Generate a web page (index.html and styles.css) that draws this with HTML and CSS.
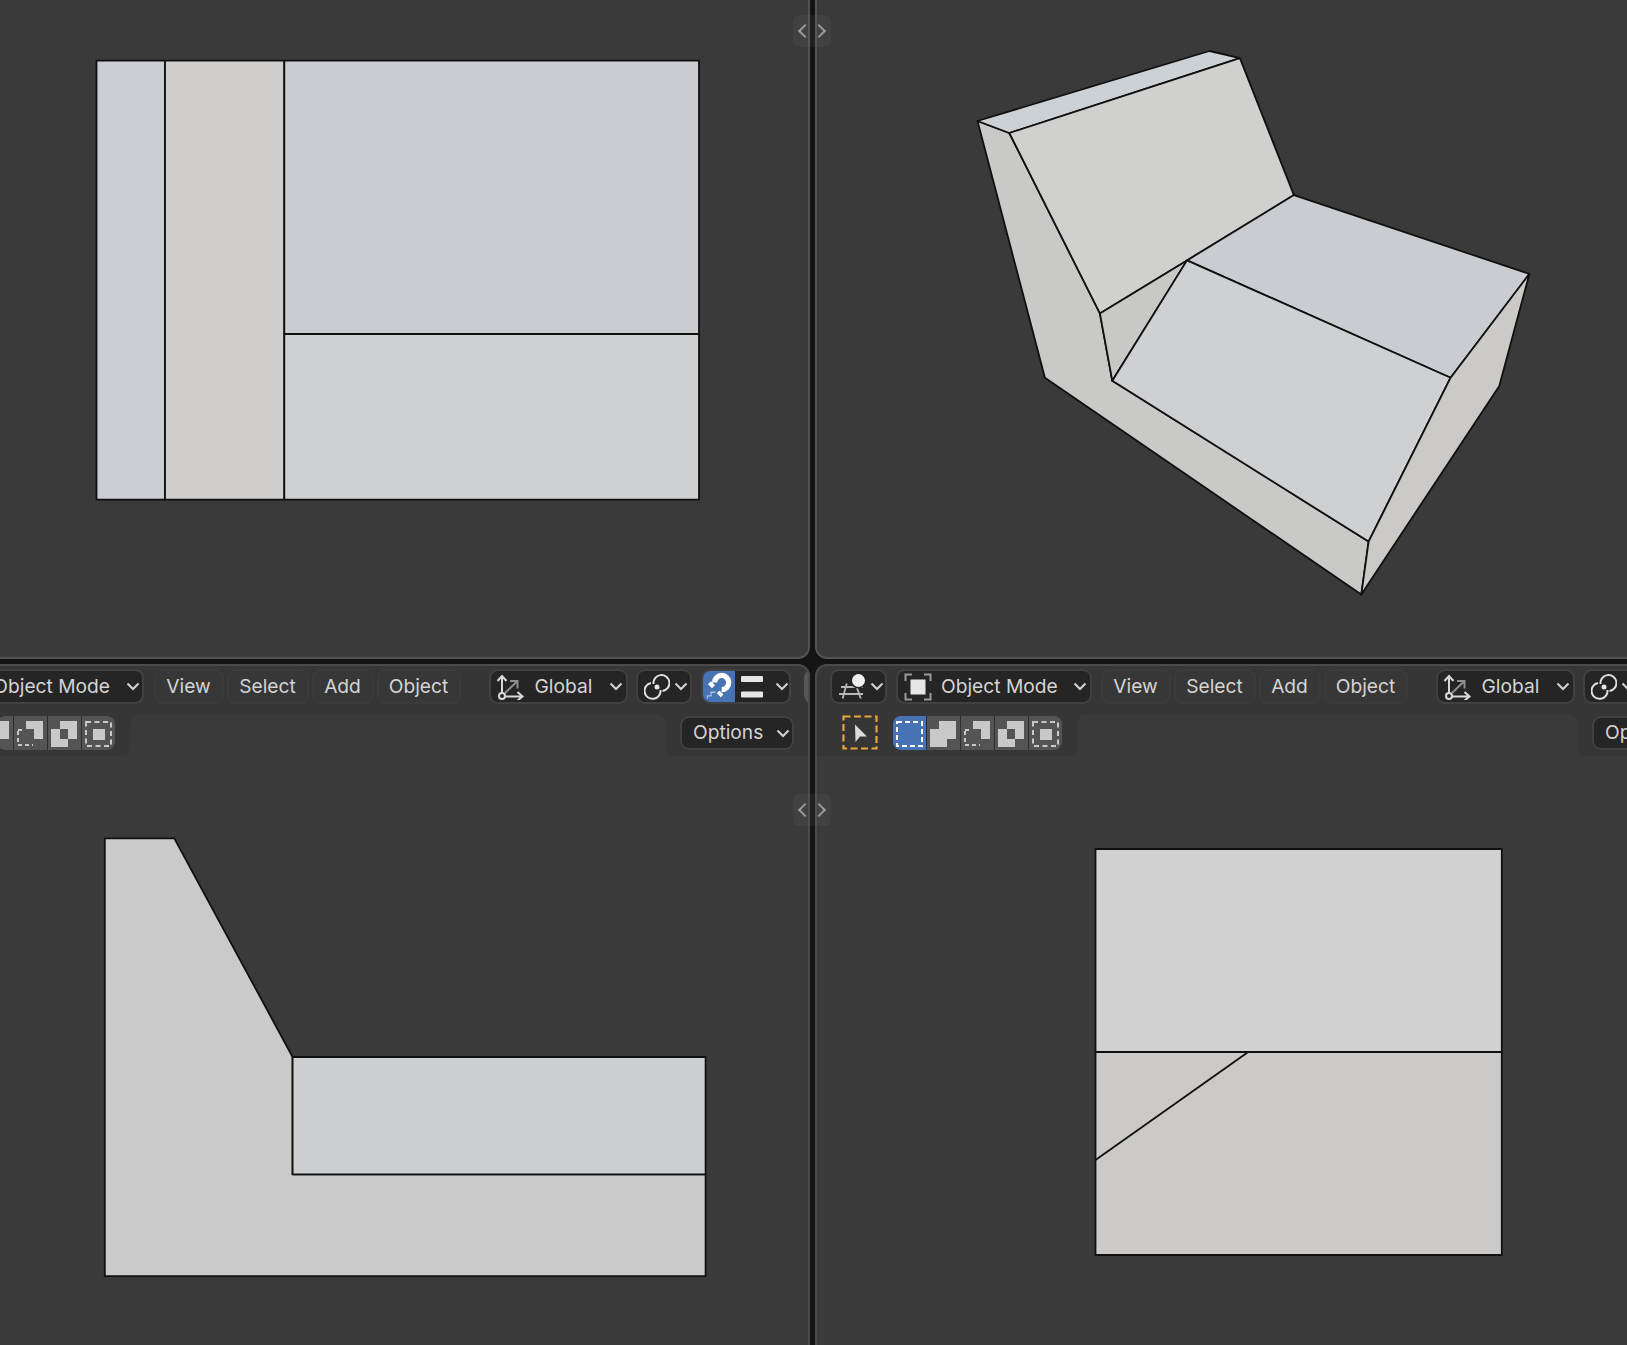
FILE: index.html
```html
<!DOCTYPE html>
<html lang="en">
<head>
<meta charset="utf-8">
<title>Blender quad view</title>
<link rel="stylesheet" href="styles.css">
</head>
<body>
<svg class="sprite" aria-hidden="true">
  <symbol id="i-chev" viewBox="0 0 14 9"><path d="M1.500 1.500 7 7l5.500-5.500" fill="none" stroke="currentColor" stroke-width="2"/></symbol>
  <symbol id="i-orient" viewBox="0 0 30 26">
    <path d="M10 19 21.500 8" fill="none" stroke="#8f8f8f" stroke-width="2"/>
    <path d="M15 7h7.500v7.500" fill="none" stroke="#8f8f8f" stroke-width="2"/>
    <path d="M7 19V2M2.500 7 7 2l4.500 5M10 22.500h17.500M22.500 18l5 4.500-5 4" fill="none" stroke="#d9d9d9" stroke-width="2"/>
    <circle cx="7" cy="22" r="3" fill="none" stroke="#d9d9d9" stroke-width="2"/>
  </symbol>
  <symbol id="i-link" viewBox="0 0 26 26">
    <path d="M9.500 10A8 8 0 1 1 18.500 17M16.500 16A8 8 0 1 1 7 9" fill="none" stroke="#e0e0e0" stroke-width="2"/>
    <circle cx="13" cy="13" r="2.500" fill="#e6e6e6"/>
  </symbol>
  <symbol id="i-magnet" viewBox="0 0 32 35">
    <path d="M11 13A8 8 0 1 1 19 21" fill="none" stroke="#fff" stroke-width="6"/>
    <path d="M7 11.500l4.500 4.500-3.500 3.500-4.500-4.500zM16.500 22l4.500 4.500-3 3-4.500-4.500z" fill="#fff"/>
    <path d="M3 31v-3h4v-4h5" fill="none" stroke="#a9c1e6" stroke-width="1.500"/>
  </symbol>
  <symbol id="i-bars" viewBox="0 0 24 24">
    <rect x="1" y="1" width="22" height="6" rx="1" fill="#e6e6e6"/>
    <rect x="1" y="16.500" width="22" height="6" rx="1" fill="#e6e6e6"/>
  </symbol>
  <symbol id="i-object" viewBox="0 0 28 28">
    <path d="M1.500 8V1.500H8M20 1.500h6.500V8M26.500 20v6.500H20M8 26.500H1.500V20" fill="none" stroke="#9a9a9a" stroke-width="2"/>
    <rect x="6.500" y="6.500" width="15" height="15" fill="#e6e6e6"/>
  </symbol>
  <symbol id="i-editor" viewBox="0 0 30 30">
    <path d="M2 15H24M0 22H24M7.700 11.500 3.700 26.500M17.700 15l4 11.500" fill="none" stroke="#b8b8b8" stroke-width="1.800"/>
    <circle cx="19.500" cy="8.500" r="8" fill="#252525"/>
    <circle cx="19.500" cy="8.500" r="6.500" fill="#f0f0f0"/>
    <path d="M24 4a6.500 6.500 0 0 1 -8 10 6.500 6.500 0 0 0 8 -10z" fill="#a8a8a8"/>
  </symbol>
  <symbol id="i-set" viewBox="0 0 33 33">
    <rect x="4" y="5" width="25" height="24" fill="none" stroke="#fff" stroke-width="2" stroke-dasharray="5 3"/>
  </symbol>
  <symbol id="i-extend" viewBox="0 0 33 33">
    <path d="M12 4h17v18h-9v8H3V12h9z" fill="#c9c9c9"/>
  </symbol>
  <symbol id="i-sub" viewBox="0 0 33 33">
    <path d="M12 4h17v18H20V12h-8z" fill="#c9c9c9"/>
    <path d="M4 14v14h15" fill="none" stroke="#c9c9c9" stroke-width="2" stroke-dasharray="4 3"/>
    <path d="M4 13h4" fill="none" stroke="#c9c9c9" stroke-width="2"/>
  </symbol>
  <symbol id="i-diff" viewBox="0 0 33 33">
    <path d="M12 4h17v18h-9V12h-8zM3 12h9v10h8v8H3z" fill="#c9c9c9"/>
  </symbol>
  <symbol id="i-inter" viewBox="0 0 33 33">
    <rect x="11" y="12" width="12" height="11" fill="#c9c9c9"/>
    <rect x="4" y="5" width="25" height="24" fill="none" stroke="#c9c9c9" stroke-width="2" stroke-dasharray="5 3.500"/>
  </symbol>
  <symbol id="i-tool" viewBox="0 0 36 35">
    <rect x="1.500" y="1.500" width="33" height="32" fill="none" stroke="#e8a53a" stroke-width="2.200" stroke-dasharray="7 3.500"/>
    <path d="M13 9.500 25 21.500H18L13.500 27z" fill="#dcdcdc"/>
  </symbol>
</svg>

<div class="app">
  <section class="pane pane-tl">
    <svg class="mesh" viewBox="0 0 810 659">
      <g class="edges">
        <rect class="f-blue" x="96.500" y="60.700" width="68.500" height="439"/>
        <rect class="f-warm" x="165" y="60.700" width="119.300" height="439"/>
        <rect class="f-blue2" x="284.300" y="60.700" width="414.700" height="273.300"/>
        <rect class="f-light" x="284.300" y="334" width="414.700" height="165.700"/>
      </g>
    </svg>
  </section>

  <section class="pane pane-tr">
    <svg class="mesh" viewBox="815 0 812 659">
      <g class="edges">
        <polygon class="f-side" points="977.500,121 1009.300,133 1099.900,313.400 1112.300,380.800 1368.600,541.600 1361.300,594.500 1044.900,377.700"/>
        <polygon class="f-top" points="977.500,121 1209.500,51 1239.900,58.100 1009.300,133"/>
        <polygon class="f-back" points="1009.300,133 1239.900,58.100 1293.900,195.100 1187,260.400 1099.900,313.400"/>
        <polygon class="f-inner" points="1099.900,313.400 1187,260.400 1112.300,380.800"/>
        <polygon class="f-seat" points="1293.900,195.100 1529.400,273.900 1450.600,377.700 1187,260.400"/>
        <polygon class="f-front" points="1187,260.400 1450.600,377.700 1368.600,541.600 1112.300,380.800"/>
        <polygon class="f-right" points="1450.600,377.700 1529.400,273.900 1499.300,386 1361.300,594.500 1368.600,541.600"/>
      </g>
    </svg>
  </section>

  <section class="pane pane-bl">
    <svg class="mesh" viewBox="0 664 810 681">
      <g class="edges">
        <polygon class="f-grey" points="104.800,838.400 174.300,838.400 292.600,1057 292.600,1174.300 705.600,1174.300 705.600,1276.200 104.800,1276.200"/>
        <rect class="f-cool" x="292.600" y="1057" width="413" height="117.300"/>
      </g>
    </svg>
    <div class="header">
      <div class="bar bar-left">
        <div class="drop mode mode-left"><span class="label">Object Mode</span><svg class="chev"><use href="#i-chev"/></svg></div>
        <div class="menu">
          <span class="item i-view">View</span><span class="item i-select">Select</span><span class="item i-add">Add</span><span class="item i-object">Object</span>
        </div>
        <div class="drop orient"><svg class="ic-orient"><use href="#i-orient"/></svg><span class="label">Global</span><svg class="chev"><use href="#i-chev"/></svg></div>
        <div class="drop pivot"><svg class="ic-link"><use href="#i-link"/></svg><svg class="chev"><use href="#i-chev"/></svg></div>
        <div class="drop snap"><span class="snap-on"><svg class="ic-magnet"><use href="#i-magnet"/></svg></span><svg class="ic-bars"><use href="#i-bars"/></svg><svg class="chev"><use href="#i-chev"/></svg></div>
        <span class="clip-btn"></span>
      </div>
    </div>
    <div class="tools">
      <div class="panel panel-left">
        <div class="modes">
          <span class="cell cell-clip"><svg class="ic-cell"><use href="#i-extend"/></svg></span>
          <span class="cell"><svg class="ic-cell"><use href="#i-sub"/></svg></span>
          <span class="cell"><svg class="ic-cell"><use href="#i-diff"/></svg></span>
          <span class="cell"><svg class="ic-cell"><use href="#i-inter"/></svg></span>
        </div>
      </div>
      <div class="strip strip-left"></div>
      <div class="panel panel-opts">
        <div class="drop options"><span class="label">Options</span><svg class="chev"><use href="#i-chev"/></svg></div>
      </div>
    </div>
  </section>

  <section class="pane pane-br">
    <svg class="mesh" viewBox="815 664 812 681">
      <g class="edges">
        <rect class="f-upper" x="1095.500" y="849" width="406.300" height="203"/>
        <rect class="f-lower" x="1095.500" y="1052" width="406.300" height="203"/>
        <path d="M1095.500 1160 1248.200 1052"/>
      </g>
    </svg>
    <div class="header">
      <div class="bar bar-right">
        <div class="drop editor"><svg class="ic-editor"><use href="#i-editor"/></svg><svg class="chev"><use href="#i-chev"/></svg></div>
        <div class="drop mode"><svg class="ic-object"><use href="#i-object"/></svg><span class="label">Object Mode</span><svg class="chev"><use href="#i-chev"/></svg></div>
        <div class="menu">
          <span class="item i-view">View</span><span class="item i-select">Select</span><span class="item i-add">Add</span><span class="item i-object">Object</span>
        </div>
        <div class="drop orient"><svg class="ic-orient"><use href="#i-orient"/></svg><span class="label">Global</span><svg class="chev"><use href="#i-chev"/></svg></div>
        <div class="drop pivot"><svg class="ic-link"><use href="#i-link"/></svg><svg class="chev"><use href="#i-chev"/></svg></div>
      </div>
    </div>
    <div class="tools">
      <div class="panel panel-right">
        <svg class="ic-tool"><use href="#i-tool"/></svg>
        <div class="modes">
          <span class="cell cell-on"><svg class="ic-cell"><use href="#i-set"/></svg></span>
          <span class="cell"><svg class="ic-cell"><use href="#i-extend"/></svg></span>
          <span class="cell"><svg class="ic-cell"><use href="#i-sub"/></svg></span>
          <span class="cell"><svg class="ic-cell"><use href="#i-diff"/></svg></span>
          <span class="cell"><svg class="ic-cell"><use href="#i-inter"/></svg></span>
        </div>
      </div>
      <div class="strip strip-right"></div>
      <div class="panel panel-opts">
        <div class="drop options"><span class="label">Options</span></div>
      </div>
    </div>
  </section>

  <div class="widget widget-top"><i class="arrow arrow-l"></i><i class="arrow arrow-r"></i></div>
  <div class="widget widget-bottom"><i class="arrow arrow-l"></i><i class="arrow arrow-r"></i></div>
</div>
</body>
</html>
```

FILE: styles.css
```css
* { box-sizing: border-box; }
html, body { margin: 0; padding: 0; height: 100%; background: #141414; }
body { overflow: hidden; font-family: Inter, "Liberation Sans", sans-serif; }
.sprite { position: absolute; width: 0; height: 0; }

.app {
  position: relative;
  width: 1627px;
  height: 1345px;
  display: grid;
  grid-template-columns: 810px 812px;
  grid-template-rows: 659px 681px;
  column-gap: 5px;
  row-gap: 5px;
  overflow: hidden;
}
.pane { position: relative; overflow: hidden; background: #3a3a3a; }
.pane::after {
  content: "";
  position: absolute;
  inset: 0;
  border: 0 solid #525252;
  border-radius: inherit;
  pointer-events: none;
}
.pane-tl { border-bottom-right-radius: 12px; }
.pane-tl::after { border-width: 0 2px 2px 0; }
.pane-tr { border-bottom-left-radius: 12px; }
.pane-tr::after { border-width: 0 0 2px 2px; }
.pane-bl { border-top-right-radius: 12px; }
.pane-bl::after { border-width: 2px 2px 0 0; border-color: #4a4a4a; }
.pane-br { border-top-left-radius: 12px; }
.pane-br::after { border-width: 2px 0 0 2px; border-color: #4a4a4a; }

.mesh { position: absolute; inset: 0; width: 100%; height: 100%; }
.edges > * { stroke: #101010; stroke-width: 1.8; stroke-linejoin: round; fill: none; }
.edges > .f-blue { fill: #cbced3; }
.edges > .f-warm { fill: #cfcecc; }
.edges > .f-blue2 { fill: #c9ccd1; }
.edges > .f-light { fill: #cfd0d1; }
.edges > .f-side { fill: #c9c9c8; }
.edges > .f-top { fill: #ccd1d6; }
.edges > .f-back { fill: #d0d0cf; }
.edges > .f-inner { fill: #c8c8c6; }
.edges > .f-seat { fill: #c9ccd0; }
.edges > .f-front { fill: #ced0d3; }
.edges > .f-right { fill: #cbcac7; }
.edges > .f-grey { fill: #cacaca; }
.edges > .f-cool { fill: #cdced2; }
.edges > .f-upper { fill: #d1d1d1; }
.edges > .f-lower { fill: #cbcac8; }

.header {
  position: relative;
  height: 40px;
  padding-top: 5px;
  background: #363636;
}
.bar {
  display: flex;
  align-items: stretch;
  height: 35px;
  white-space: nowrap;
  color: #d4d4d4;
  font-size: 19.2px;
}
.bar-left { margin-left: -52px; }
.bar-right { padding-left: 15px; }

.drop {
  flex: none;
  display: flex;
  align-items: center;
  height: 35px;
  padding-bottom: 2px;
  background: #252525;
  border: 2px solid #414141;
  border-radius: 9px;
  color: #d4d4d4;
  font-size: 19.2px;
  line-height: 30px;
}
.drop > svg { position: relative; top: 1px; }
.chev { width: 14px; height: 9px; color: #d4d4d4; flex: none; }

.editor { width: 57px; padding-left: 7px; margin-right: 9px; }
.ic-editor { width: 30px; height: 30px; flex: none; }
.editor .chev { margin-left: 1px; }

.mode { width: 196px; padding-left: 6px; }
.ic-object { width: 28px; height: 28px; flex: none; }
.mode .label { margin-left: 9px; }
.mode .chev { margin-left: auto; margin-right: 3px; }
.mode-left { justify-content: flex-end; }
.mode-left .label { margin-left: 0; margin-right: 16px; }
.mode-left .chev { margin-left: 0; margin-right: 2px; }

.menu { flex: none; display: flex; margin-left: 8.5px; }
.bar-left .menu { margin-left: 9.5px; }
.item {
  display: flex;
  align-items: center;
  justify-content: center;
  height: 35px;
  padding-bottom: 2px;
  background: #373737;
  border: 2px solid #3b3b3b;
  border-radius: 9px;
  margin-right: 3px;
}
.i-view { width: 70px; }
.i-select { width: 82px; }
.i-add { width: 62px; }
.i-object { width: 84px; margin-right: 0; }

.orient { width: 139px; margin-left: 28px; padding-left: 4px; }
.ic-orient { width: 30px; height: 26px; flex: none; }
.orient .label { margin-left: 10px; }
.orient .chev { margin-left: auto; margin-right: 3px; }

.pivot { width: 56px; margin-left: 8px; padding-left: 6px; }
.ic-link { width: 26px; height: 26px; flex: none; }
.pivot .chev { margin-left: 4px; }

.snap { width: 90px; margin-left: 9px; overflow: hidden; padding-bottom: 0; }
.snap > svg { top: 0; }
.snap-on { display: flex; align-items: center; width: 32px; height: 100%; background: #4772b3; flex: none; }
.ic-magnet { width: 32px; height: 31px; }
.ic-bars { width: 24px; height: 24px; margin-left: 5px; flex: none; }
.snap .chev { margin-left: 11px; }

.clip-btn {
  flex: none;
  width: 20px;
  height: 35px;
  margin-left: 13px;
  border-radius: 9px;
  background: #565656;
}

.tools {
  position: relative;
  display: flex;
  align-items: flex-start;
  height: 52px;
  background: linear-gradient(#363636 20px, transparent 20px);
}
.panel {
  flex: none;
  display: flex;
  align-items: flex-start;
  height: 52px;
  background: #363636;
  padding-top: 12px;
}
.panel-left { width: 130px; justify-content: flex-end; padding-right: 15px; border-bottom-right-radius: 9px; }
.panel-right { width: 262px; padding-left: 27px; border-bottom-right-radius: 9px; }
.panel-opts { flex: 1 0 auto; padding-left: 15px; border-bottom-left-radius: 9px; }
.strip {
  flex: none;
  margin-top: 10px;
  height: 42px;
  background: #3a3a3a;
  border-radius: 9px 9px 0 0;
}
.strip-left { width: 535px; }
.strip-right { width: 500px; }

.ic-tool { width: 36px; height: 35px; margin-right: 15px; margin-top: -1px; flex: none; }
.modes { flex: none; display: flex; gap: 1px; height: 34px; border-radius: 8px; overflow: hidden; background: #2e2e2e; }
.cell { width: 33px; height: 34px; background: #545454; display: flex; align-items: center; justify-content: center; }
.cell-on { background: #4772b3; }
.cell-clip { width: 16px; justify-content: flex-end; }
.ic-cell { width: 33px; height: 33px; flex: none; }

.options { width: 114px; height: 34px; padding-left: 11px; }
.options .chev { margin-left: auto; margin-right: 2px; }

.widget {
  position: absolute;
  left: 793px;
  width: 38px;
  height: 32px;
  background: rgba(120, 120, 120, 0.12);
  border-radius: 6px;
  display: flex;
  align-items: center;
  justify-content: space-between;
  padding: 0 5px;
}
.widget-top { top: 15px; }
.widget-bottom { top: 794px; }
.arrow { display: block; width: 10px; height: 10px; border: solid #9a9a9a; border-width: 0 0 2.5px 2.5px; }
.arrow-l { transform: rotate(45deg); margin-left: 2px; }
.arrow-r { transform: rotate(225deg); margin-right: 2px; }
```
